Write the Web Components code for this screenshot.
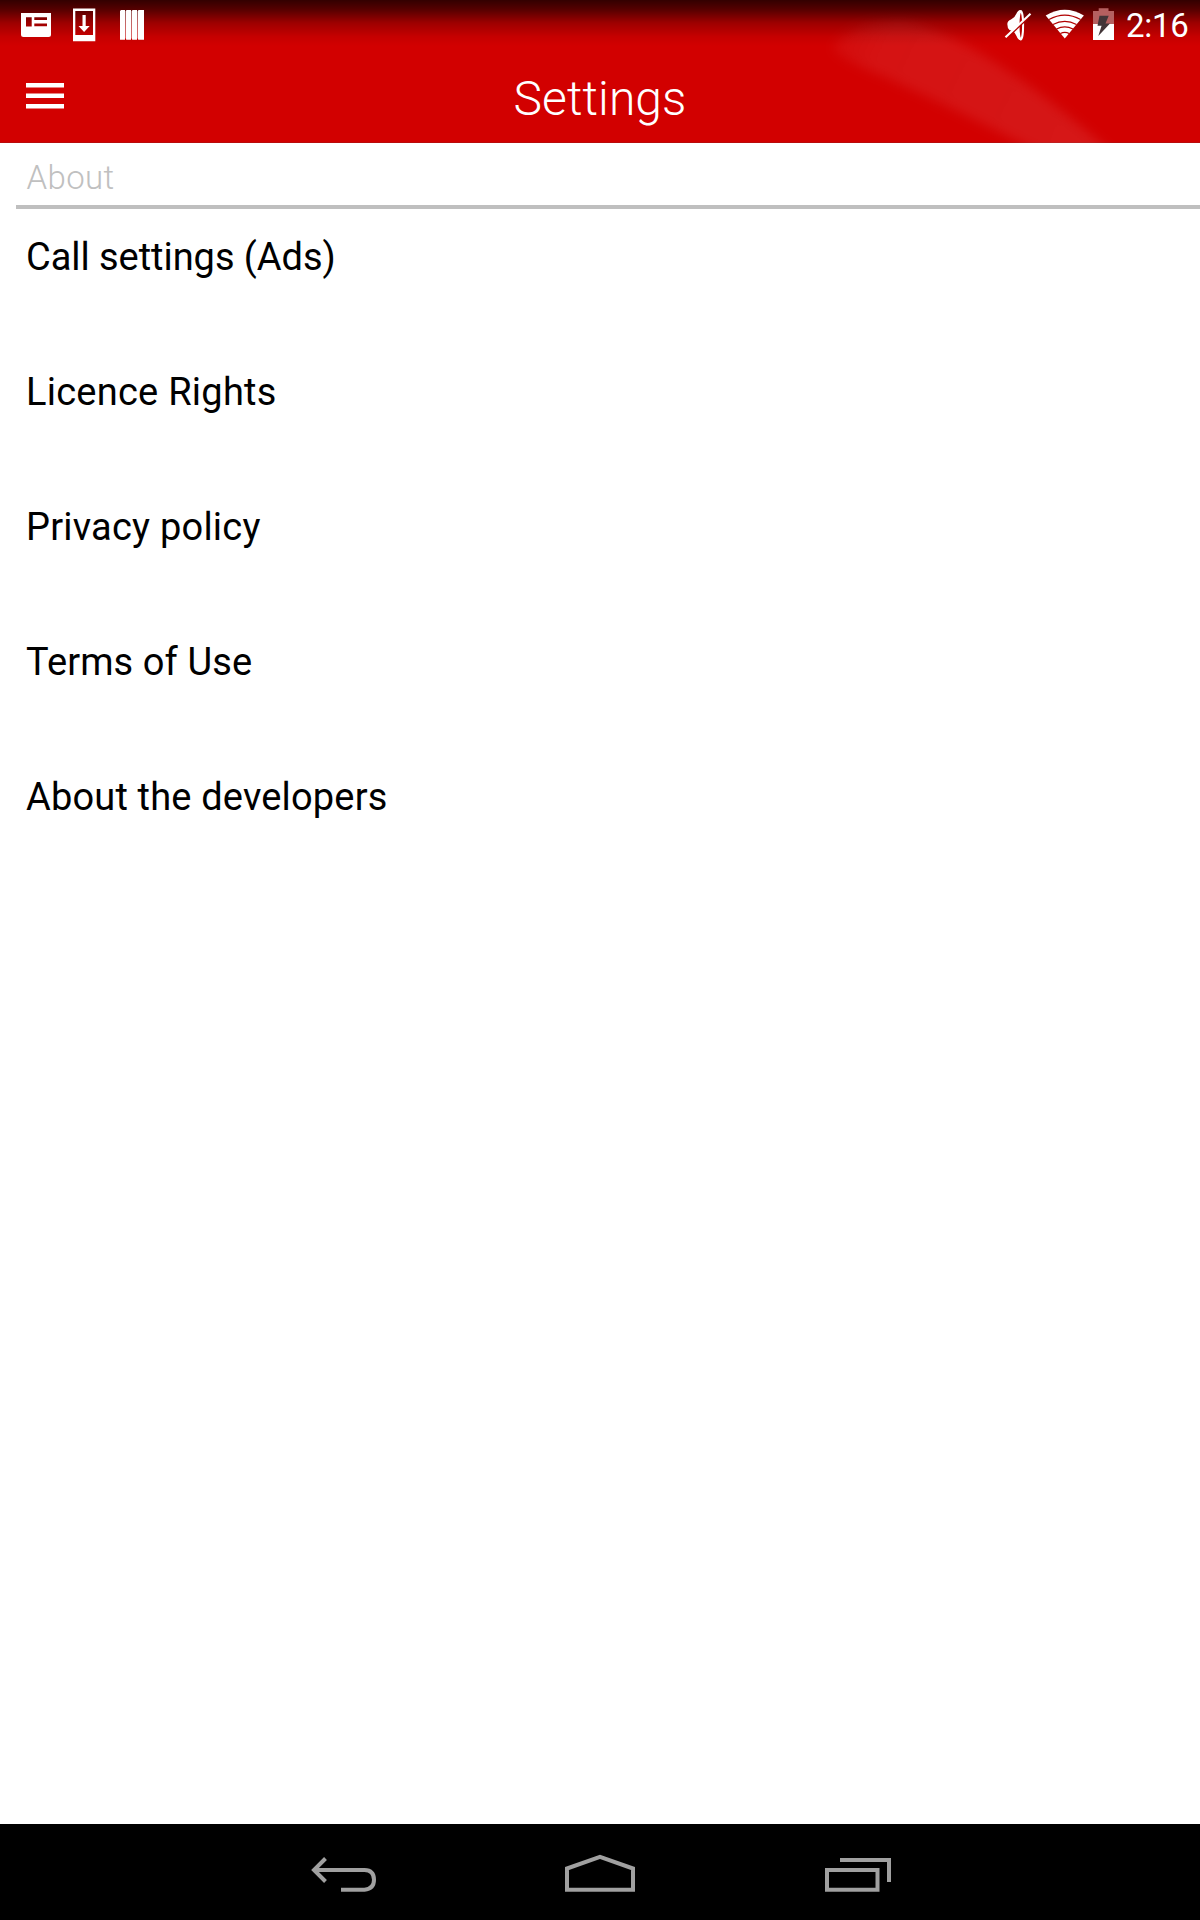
<!DOCTYPE html>
<html lang="en">
<head>
<meta charset="utf-8">
<title>Settings</title>
<style>
html,body{margin:0;padding:0;background:#fff}
body{width:1200px;height:1920px;overflow:hidden;font-family:Roboto,"Noto Sans",sans-serif}
</style>
</head>
<body>
<settings-screen>
  <app-header slot="header">
    <status-bar slot="status">2:16</status-bar>
    Settings
  </app-header>
  <settings-section heading="About">
    <settings-item style="--track:-.05px">Call settings (Ads)</settings-item>
    <settings-item style="--track:.25px">Licence Rights</settings-item>
    <settings-item style="--track:.22px">Privacy policy</settings-item>
    <settings-item style="--track:.1px">Terms of Use</settings-item>
    <settings-item style="--track:.17px">About the developers</settings-item>
  </settings-section>
  <nav-bar slot="footer"></nav-bar>
</settings-screen>
<script>
const define = (name, html, setup) => {
  const template = document.createElement('template');
  template.innerHTML = html;
  customElements.define(name, class extends HTMLElement {
    constructor() {
      super();
      this.attachShadow({mode: 'open'}).append(template.content.cloneNode(true));
    }
    connectedCallback() { if (setup) setup(this); }
  });
};

define('status-bar', `
<style>
:host{display:flex;height:50px;justify-content:space-between;color:#fff}
svg{display:block;flex:none}
.right{display:flex}
.time{font-size:33px;line-height:52px;width:75px;padding-left:1px;box-sizing:border-box;white-space:nowrap;letter-spacing:-.3px}
</style>
<svg width="160" height="50" viewBox="0 0 160 50" fill="#fff">
  <path fill-rule="evenodd" d="M21 13H51V34.5Q51 37 48.500 37H23.500Q21 37 21 34.500ZM26 17.300V26.500H31.700V17.300ZM34.300 17.300V20H47V17.300ZM34.300 23.500V26.200H47V23.500Z"/>
  <path fill-rule="evenodd" d="M73 8.500H95.300V41.300H73ZM75.300 11V35H93V11Z"/>
  <path d="M82.500 15H85.700V26H89.700L84.100 32L78.500 26H82.500Z"/>
  <path d="M120 11L121 10H125V39.700H120ZM125.600 11L126.600 10H131V39.700H126.300L125.600 38ZM131.600 11L132.600 10H137V39.700H132.300L131.600 38ZM137.600 11L138.600 10H144V39.700H138.300L137.600 38Z"/>
</svg>
<div class="right">
  <svg width="145" height="50" viewBox="980 0 145 50">
    <g fill="#fff">
      <path d="M1007.300 24Q1007.500 20.500 1011 19.500Q1015 17.500 1016.500 13.500Q1018 10 1020.300 10L1020 25L1020.300 40.200Q1018 40 1016.500 36Q1015 32 1012 30.800L1009.500 30Q1007.300 28 1007.300 24Z"/>
      <ellipse cx="1020.800" cy="25.200" rx="2.300" ry="14.200" fill="#b50000" stroke="#fff" stroke-width="2"/>
      <path d="M1008.500 36.400L1028 18.100" stroke="#b00000" stroke-width="1.800"/>
      <path d="M1005.500 37.300L1030.500 13.800" stroke="#fff" stroke-width="2.100"/>
      <path d="M1045.700 15.500Q1064.700 4 1083.900 15.500L1064.800 38.500Z"/>
    </g>
    <g fill="none" stroke="#b00000" stroke-width="1.200">
      <path d="M1049 19.600Q1064.800 10.500 1080.600 19.600"/>
      <path d="M1053 24.600Q1064.800 18 1076.500 24.600"/>
      <path d="M1056.500 29.100Q1064.800 24.500 1073 29.100"/>
      <path d="M1060.400 33.600Q1064.800 31 1069.200 33.600"/>
    </g>
    <path d="M1093 11H1098.700V8.200H1108.500V11H1114V24H1093Z" fill="#b56060"/>
    <path d="M1093 24H1114V40H1093Z" fill="#fff"/>
    <path d="M1099.500 15.800H1108.700L1105.500 23.600H1110L1098.300 36L1101.600 25.800H1097.500Z" fill="#423538"/>
  </svg>
  <div class="time"><slot></slot></div>
</div>`);

define('menu-button', `
<style>:host{display:block}svg{display:block}</style>
<svg width="38" height="26" viewBox="0 0 38 26" fill="#fff"><path d="M0 0H38V4.500H0ZM0 10.500H38V15H0ZM0 21H38V25.500H0Z"/></svg>`);

define('app-header', `
<style>
:host{display:grid;height:143px;overflow:hidden;background:#d20000;box-shadow:inset 0 -1px #b90c0c}
.sheen,.content{grid-area:1/1}
.sheen{display:block}
.content{display:flex;flex-direction:column;position:relative}
.bar{display:grid;grid-template-columns:200px 1fr 200px;align-items:start;height:93px}
menu-button{margin:33px 0 0 26px}
.title{color:#fff;font-size:48px;font-weight:300;line-height:60px;margin-top:19px;text-align:center;white-space:nowrap;letter-spacing:.1px}
</style>
<svg class="sheen" width="1200" height="143" viewBox="0 0 1200 143">
  <defs>
    <linearGradient id="shade" x1="0" y1="0" x2="0" y2="1">
      <stop offset="0" stop-color="#000" stop-opacity=".76"/>
      <stop offset=".2" stop-color="#000" stop-opacity=".6"/>
      <stop offset=".5" stop-color="#000" stop-opacity=".25"/>
      <stop offset=".8" stop-color="#000" stop-opacity=".06"/>
      <stop offset="1" stop-color="#000" stop-opacity="0"/>
    </linearGradient>
    <linearGradient id="glow" gradientUnits="userSpaceOnUse" x1="820" y1="20" x2="1070" y2="140">
      <stop offset="0" stop-color="#fff" stop-opacity=".03"/>
      <stop offset=".25" stop-color="#fff" stop-opacity=".075"/>
      <stop offset="1" stop-color="#fff" stop-opacity=".09"/>
    </linearGradient>
    <filter id="soft" x="-20%" y="-30%" width="140%" height="160%" color-interpolation-filters="sRGB"><feGaussianBlur stdDeviation="6"/></filter>
  </defs>
  <path d="M832 48Q855 18 905 20Q985 40 1118 158L1050 158Q962 112 885 77Q842 60 832 48Z" fill="url(#glow)" filter="url(#soft)"/>
  <rect width="1200" height="46" fill="url(#shade)"/>
</svg>
<div class="content">
  <slot name="status"></slot>
  <div class="bar"><menu-button></menu-button><div class="title"><slot></slot></div></div>
</div>`);

define('settings-section', `
<style>
:host{display:block}
.heading{height:62px;margin-left:16px;padding-left:10.500px;border-bottom:4px solid #bfbfbf;font-size:33px;font-weight:300;line-height:69px;color:#c0c0c0;letter-spacing:.35px}
</style>
<div class="heading"></div>
<slot></slot>`, el => { el.shadowRoot.querySelector('.heading').textContent = el.getAttribute('heading'); });

define('settings-item', `
<style>
:host{display:block;box-sizing:border-box;height:135px;padding:26px 26px 0;font-size:38px;line-height:44px;color:#000;white-space:nowrap;letter-spacing:var(--track,0)}
</style>
<slot></slot>`);

define('nav-bar', `
<style>
:host{display:flex;height:96px;background:#000;padding-left:300px}
svg{display:block;flex:none}
.back{margin-right:150px}
.home{margin-right:160px}
</style>
<svg class="back" width="100" height="96" viewBox="0 4 100 96" fill="none" stroke="#a0a0a0" stroke-width="4"><path d="M41 69.700H64.500Q74 69 74 59.800Q74 50.300 64.500 50H15"/><path d="M25.500 38.500L14 50L25.500 61.500"/></svg>
<svg class="home" width="100" height="96" viewBox="0 4 100 96" fill="none" stroke="#a0a0a0" stroke-width="4"><path d="M17 69.700V48.500L50 36.800L83 48.500V69.700Z"/></svg>
<svg width="100" height="96" viewBox="0 4 100 96" fill="none" stroke="#a0a0a0" stroke-width="4"><path d="M17 50H67.500V69.700H17Z"/><path d="M30 40H79V62"/></svg>`);

define('settings-screen', `
<style>
:host{display:flex;flex-direction:column;width:1200px;height:1920px;background:#fff}
main{flex:1}
</style>
<slot name="header"></slot>
<main><slot></slot></main>
<slot name="footer"></slot>`);
</script>
</body>
</html>
